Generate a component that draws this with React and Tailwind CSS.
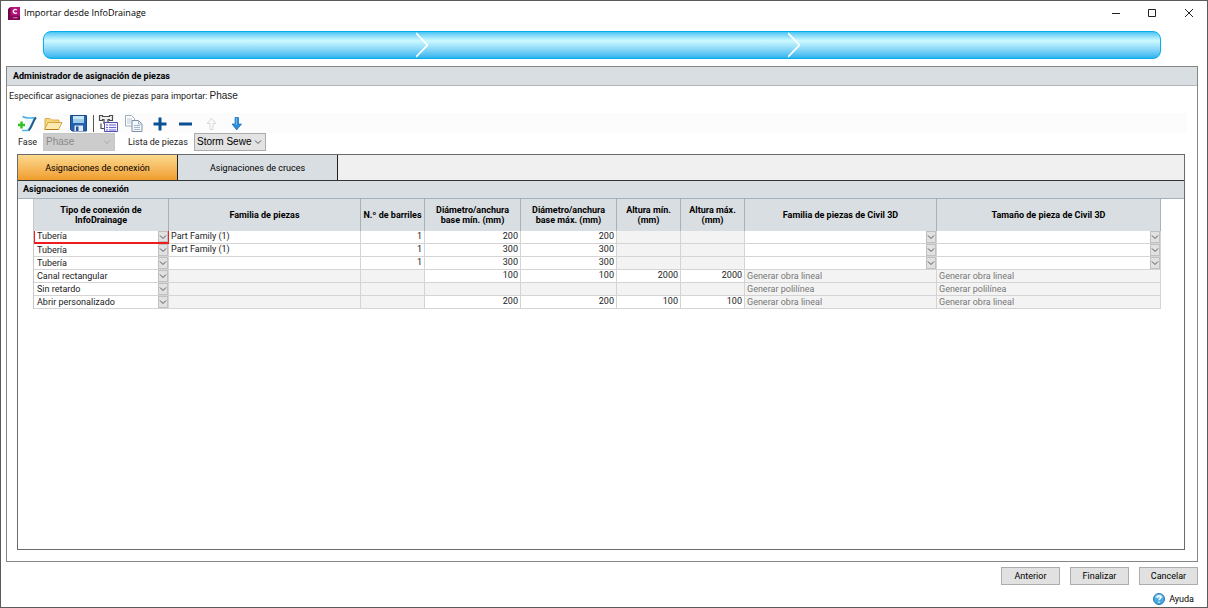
import React, { useState } from 'react';

const STEPS = ['Paso 1', 'Paso 2', 'Paso 3'];

const CONNECTION_TYPES = ['Tubería', 'Canal rectangular', 'Sin retardo', 'Abrir personalizado'];

const ROWS = [
  { id: 1, type: 'Tubería', family: 'Part Family (1)', barrels: '1', min: '200', max: '200', generated: null },
  { id: 2, type: 'Tubería', family: 'Part Family (1)', barrels: '1', min: '300', max: '300', generated: null },
  { id: 3, type: 'Tubería', family: '', barrels: '1', min: '300', max: '300', generated: null },
  { id: 4, type: 'Canal rectangular', min: '100', max: '100', hMin: '2000', hMax: '2000', generated: 'Generar obra lineal' },
  { id: 5, type: 'Sin retardo', generated: 'Generar polilínea' },
  { id: 6, type: 'Abrir personalizado', min: '200', max: '200', hMin: '100', hMax: '100', generated: 'Generar obra lineal' },
];

const TABS = ['Asignaciones de conexión', 'Asignaciones de cruces'];

export default function App() {
  const [tab, setTab] = useState(0);

  return (
    <div className="flex min-h-screen flex-col border border-[#5a5a5a] bg-white font-[Roboto,Arial,sans-serif] text-[9px] leading-3 text-[#222]">
      <TitleBar />
      <ProgressBar />

      <main className="mt-[7px] mr-[9px] ml-[5px] flex flex-1 flex-col border border-[#858585] bg-white">
        <h1 className="h-[19px] border-b border-[#b4b6b8] bg-[#d9dee2] pl-1.5 leading-[19px] font-bold text-black">
          Administrador de asignación de piezas
        </h1>
        <p className="mt-1 flex gap-0.5 pl-0.5 leading-3">
          <span>Especificar asignaciones de piezas para importar:</span>
          <span className="font-['Liberation_Sans',Arial,sans-serif] text-[10px]">Phase</span>
        </p>

        <div className="mx-2.5 mt-[11px]">
          <Toolbar />
          <Filters />
        </div>

        <section className="mx-2.5 mt-[3px] mr-3 mb-[11px] flex flex-1 flex-col border border-[#6b6b6b]">
          <div role="tablist" className="flex h-[26px] border-b border-[#333] bg-[#f0f0f0]">
            {TABS.map((label, i) => (
              <button
                key={label}
                type="button"
                role="tab"
                aria-selected={tab === i}
                onClick={() => setTab(i)}
                className={`w-40 border-r border-[#222] text-center text-black ${
                  tab === i ? 'bg-linear-to-b from-[#fbd98c] to-[#f09d28]' : 'bg-[#d9dee2]'
                }`}
              >
                {label}
              </button>
            ))}
          </div>
          <h2 className="h-[18px] border-b border-[#a3b1bd] bg-[#d9dee2] pl-[5px] leading-[17px] font-bold text-black">
            {TABS[tab]}
          </h2>
          <div className="pr-[23px] pl-[15px]">
            <AssignmentTable />
          </div>
        </section>
      </main>

      <footer className="mt-[5px] mr-[9px]">
        <div className="flex justify-end gap-2.5">
          <DialogButton>Anterior</DialogButton>
          <DialogButton>Finalizar</DialogButton>
          <DialogButton>Cancelar</DialogButton>
        </div>
        <div className="mt-1.5 flex h-4 justify-end">
          <a href="#ayuda" className="mr-1 flex items-center gap-1 text-black">
            <HelpIcon />
            Ayuda
          </a>
        </div>
      </footer>
    </div>
  );
}

// ── Window chrome ──────────────────────────────────────────────────────────

function TitleBar() {
  return (
    <header className="flex h-6 items-center pr-3 pl-[7px]">
      <svg width="12" height="13" viewBox="0 0 12 13" aria-hidden="true">
        <path d="M1 1.500 2.500 0H12v11.500L10.500 13H1z" fill="#b5127b" />
        <path d="M0 2 2.500 0v13H0z" fill="#6d0548" />
        <path d="M2.500 8.500H12V13H2.500z" fill="#84085a" />
        <path d="M8.800 3a2 2 0 1 0 0 2.800" fill="none" stroke="#fff" strokeWidth="1.400" />
        <path d="M5 10.700h4.500" stroke="#d77fb6" strokeWidth="1" />
      </svg>
      <span className="ml-1 font-['Open_Sans',sans-serif] text-black">Importar desde InfoDrainage</span>
      <div className="ml-auto flex gap-6 text-[#222]">
        <button type="button" aria-label="Minimizar" className="h-3 w-3">
          <svg width="12" height="12" viewBox="0 0 12 12"><path d="M1 6.500h8" stroke="currentColor" /></svg>
        </button>
        <button type="button" aria-label="Maximizar" className="h-3 w-3">
          <svg width="12" height="12" viewBox="0 0 12 12"><path d="M1.500 2.500h7v7h-7z" fill="none" stroke="currentColor" /></svg>
        </button>
        <button type="button" aria-label="Cerrar" className="h-3 w-3">
          <svg width="12" height="12" viewBox="0 0 12 12"><path d="m2 2 8 8m0-8-8 8" stroke="currentColor" /></svg>
        </button>
      </div>
    </header>
  );
}

function ProgressBar() {
  return (
    <ol className="mt-1.5 mr-[46px] ml-[42px] flex h-7 overflow-hidden rounded-lg border border-[#08aeec] bg-linear-to-b from-[#2cc0f2] via-[#cdf9ff] via-35% to-[#0ab0ee] bg-origin-border">
      {STEPS.map((step, i) => (
        <li key={step} aria-label={step} className="flex flex-1 items-center justify-end">
          {i < STEPS.length - 1 && (
            <svg width="12" height="26" viewBox="0 0 12 26" className="-mr-3 shrink-0">
              <path d="M0 1 11.500 13 0 25" fill="none" stroke="#fff" strokeWidth="1.800" />
            </svg>
          )}
        </li>
      ))}
    </ol>
  );
}

// ── Toolbar ────────────────────────────────────────────────────────────────

function ToolButton({ label, disabled, children }) {
  return (
    <button type="button" aria-label={label} disabled={disabled} className="h-[18px] w-5">
      <svg width="20" height="18" viewBox="0 0 20 18">{children}</svg>
    </button>
  );
}

function Toolbar() {
  return (
    <div role="toolbar" className="flex h-5 items-center bg-[#fcfcfc]">
      <div className="flex gap-1.5">
        <ToolButton label="Nuevo">
          <path d="M6 3c4 2 9 0 13 1-3 3-4 8-6 13H7c3-3 3-8-1-14z" fill="#eef8fd" />
          <path d="M5.500 2.500c4 2.500 9 1 13 1.500" fill="none" stroke="#4fb3dd" strokeWidth="1.600" />
          <path d="M19 3.500c-3.500 3-3.500 9-7.500 13" fill="none" stroke="#1f5f94" strokeWidth="2.200" />
          <path d="M5 16.500h7" stroke="#4fb3dd" strokeWidth="1.400" />
          <path d="M4.500 7.500v7M1 11h7" stroke="#2fc125" strokeWidth="2.400" />
        </ToolButton>
        <ToolButton label="Abrir">
          <path d="M2 15V4.500h5L8.500 6H16v3" fill="#f5d77c" stroke="#cfa03c" strokeWidth=".8" />
          <path d="M1.500 15.500 5 8.500h14L15.500 15.500z" fill="#fce9ad" stroke="#d39d35" strokeWidth=".9" />
          <path d="M2.500 15.500h13" stroke="#b57c1b" />
        </ToolButton>
        <ToolButton label="Guardar">
          <path d="M1.500 1.500h16v15.500H3L1.500 15.500z" fill="#2560ad" stroke="#184a8c" />
          <path d="M4 2h11v7H4z" fill="#9fcdec" />
          <path d="M4 2h11v3H4z" fill="#c9e6f7" />
          <path d="M5.500 11.500h8.500V17H5.500z" fill="#e3ecf5" />
          <path d="M7 12.500h2.500V17H7z" fill="#24539a" />
        </ToolButton>
      </div>
      <span className="mx-1 h-[17px] w-px bg-[#555]" />
      <div className="flex gap-1.5">
        <ToolButton label="Lista de piezas">
          <path d="M1.500 1.500h3v1h7v-1h3v5h-3v-1H10v4H6v-4H4.500v1h-3z" fill="#eee" stroke="#4c4c4c" strokeWidth="1.200" />
          <path d="M3 9.500v5h3" fill="none" stroke="#4c4c4c" strokeWidth="1.200" />
          <path d="M6.500 8.500h13V17.500h-13z" fill="#f4f3ff" stroke="#5150b5" />
          <path d="M8 11h2m1 0h7M8 13.500h2m1 0h7M8 16h2m1 0h7" stroke="#6966cf" strokeWidth="1.100" />
        </ToolButton>
        <ToolButton label="Copiar">
          <path d="M1.500 1.500h6l3 3V12h-9z" fill="#fbfcfe" stroke="#a1adbd" />
          <path d="M3 5h5M3 7h5M3 9h5" stroke="#b8c3d2" strokeWidth=".9" />
          <path d="M8 6.500h6.500l3.500 3.500v7.500H8z" fill="#f4f7fb" stroke="#7e91a9" />
          <path d="M14.500 6.500V10H18M10 11.500h6M10 13.500h6M10 15.500h6" fill="none" stroke="#9cafc6" strokeWidth=".9" />
        </ToolButton>
        <ToolButton label="Añadir">
          <path d="M10 3.500v13M3.500 10h13" stroke="#0b4f94" strokeWidth="3" />
        </ToolButton>
        <ToolButton label="Quitar">
          <path d="M3 10h13" stroke="#0b4f94" strokeWidth="3" />
        </ToolButton>
        <ToolButton label="Subir" disabled>
          <path d="m9.500 4.500 4.500 5h-3v6H8v-6H5z" fill="#fafafa" stroke="#d8d8d8" />
        </ToolButton>
        <ToolButton label="Bajar">
          <path d="M7 3.500h3.500V10h3l-4.800 6L4 10h3z" fill="#2b8edb" stroke="#1769b2" strokeWidth=".7" />
          <path d="M8.300 4v7" stroke="#77c4f5" />
        </ToolButton>
      </div>
    </div>
  );
}

function Chevron() {
  return (
    <svg width="8" height="6" viewBox="0 0 8 6" aria-hidden="true" className="shrink-0">
      <path d="M1 1.500 4 4.500 7 1.500" fill="none" stroke="currentColor" />
    </svg>
  );
}

function Filters() {
  return (
    <div className="flex h-[18px] items-center">
      <label htmlFor="fase" className="w-[26px] pl-px">Fase</label>
      <ComboBox id="fase" options={['Phase']} disabled />
      <label htmlFor="lista" className="ml-[13px] w-[66px]">Lista de piezas</label>
      <ComboBox id="lista" options={['Storm Sewe']} />
    </div>
  );
}

function ComboBox({ id, options, disabled }) {
  return (
    <div
      className={`relative flex h-[18px] w-[72px] items-center border ${
        disabled ? 'border-[#c6c6c6] bg-[#ccc] text-[#8a8a8a]' : 'border-[#acacac] bg-[#e3e3e3] text-black'
      }`}
    >
      <select
        id={id}
        disabled={disabled}
        className="h-full w-full appearance-none pl-0.5 font-['Liberation_Sans',Arial,sans-serif] text-[10px] opacity-100"
      >
        {options.map((o) => <option key={o}>{o}</option>)}
      </select>
      <span className={`pointer-events-none absolute right-[3px] ${disabled ? 'text-[#a5a5a5]' : 'text-[#555]'}`}>
        <Chevron />
      </span>
    </div>
  );
}

// ── Assignment table ───────────────────────────────────────────────────────

function AssignmentTable() {
  const [active, setActive] = useState(1);

  return (
    <table className="w-full table-fixed border-separate border-spacing-0 border-l border-[#c8c8c8]">
      <colgroup>
        <col className="w-[135px]" />
        <col className="w-48" />
        <col className="w-16" />
        <col className="w-24" />
        <col className="w-24" />
        <col className="w-16" />
        <col className="w-16" />
        <col className="w-48" />
        <col />
      </colgroup>
      <thead>
        <tr className="h-8">
          <Th>Tipo de conexión de<br />InfoDrainage</Th>
          <Th>Familia de piezas</Th>
          <Th>N.º de barriles</Th>
          <Th>Diámetro/anchura<br />base mín. (mm)</Th>
          <Th>Diámetro/anchura<br />base máx. (mm)</Th>
          <Th>Altura mín.<br />(mm)</Th>
          <Th>Altura máx.<br />(mm)</Th>
          <Th>Familia de piezas de Civil 3D</Th>
          <Th>Tamaño de pieza de Civil 3D</Th>
        </tr>
      </thead>
      <tbody>
        {ROWS.map((row) => (
          <tr key={row.id} className="h-[13px]" onClick={() => setActive(row.id)}>
            <td
              className={`p-0 ${
                active === row.id ? 'border-x border-b-2 border-[#ee1c1c]' : 'border-r border-b border-[#d4d4d4] pl-px'
              }`}
            >
              <CellSelect label="Tipo de conexión" value={row.type} options={CONNECTION_TYPES} active={active === row.id} />
            </td>
            <TextCell value={row.family} />
            <TextCell value={row.barrels} numeric />
            <TextCell value={row.min} numeric />
            <TextCell value={row.max} numeric />
            <TextCell value={row.hMin} numeric />
            <TextCell value={row.hMax} numeric />
            <CivilCell label="Familia de piezas de Civil 3D" generated={row.generated} />
            <CivilCell label="Tamaño de pieza de Civil 3D" generated={row.generated} />
          </tr>
        ))}
      </tbody>
    </table>
  );
}

function Th({ children }) {
  return (
    <th className="border-r border-[#a9b0b6] bg-[#d9dee2] p-0 text-center leading-[10px] font-bold whitespace-nowrap text-black">
      {children}
    </th>
  );
}

// undefined values are cells that do not apply to the connection type
function TextCell({ value, numeric }) {
  return (
    <td
      className={`border-r border-b border-[#d4d4d4] px-0.5 py-0 align-top leading-[11px] ${
        value === undefined ? 'bg-[#f3f3f3]' : 'bg-white'
      } ${numeric ? 'text-right' : ''}`}
    >
      {value}
    </td>
  );
}

function CivilCell({ label, generated }) {
  return (
    <td className={`border-r border-b border-[#d4d4d4] p-0 ${generated ? 'bg-[#f3f3f3] pl-0.5 text-[#777]' : ''}`}>
      {generated || <CellSelect label={label} value="" options={['']} />}
    </td>
  );
}

// the active cell has a thicker bottom border, which its select makes room for
function CellSelect({ label, value, options, active }) {
  const height = active ? 'h-[11px]' : 'h-3';
  return (
    <div className={`relative flex items-center ${height}`}>
      <select aria-label={label} defaultValue={value} className={`w-full appearance-none pl-0.5 leading-[11px] ${height}`}>
        {options.map((o) => <option key={o}>{o}</option>)}
      </select>
      <span className={`pointer-events-none absolute right-0 flex w-2.5 items-center justify-center border border-[#c0c0c0] bg-[#e1e1e1] text-[#555] ${height}`}>
        <Chevron />
      </span>
    </div>
  );
}

// ── Footer ─────────────────────────────────────────────────────────────────

function DialogButton({ children }) {
  return (
    <button type="button" className="h-[18px] w-[59px] border border-[#adadad] bg-[#e1e1e1] text-center text-black">
      {children}
    </button>
  );
}

function HelpIcon() {
  return (
    <svg width="12" height="12" viewBox="0 0 12 12" aria-hidden="true">
      <circle cx="6" cy="6" r="5.500" fill="#49a9e2" stroke="#2777b4" />
      <path d="M2 4.500a4.200 4.200 0 0 1 8 0c-2.500 1.200-5.500 1.200-8 0z" fill="#a4dafa" />
      <path d="M4.200 4.500c0-2.300 3.600-2.300 3.600 0C7.800 6 6 5.800 6 7.300M6 8.500v1.300" fill="none" stroke="#fff" strokeWidth="1.300" />
    </svg>
  );
}
